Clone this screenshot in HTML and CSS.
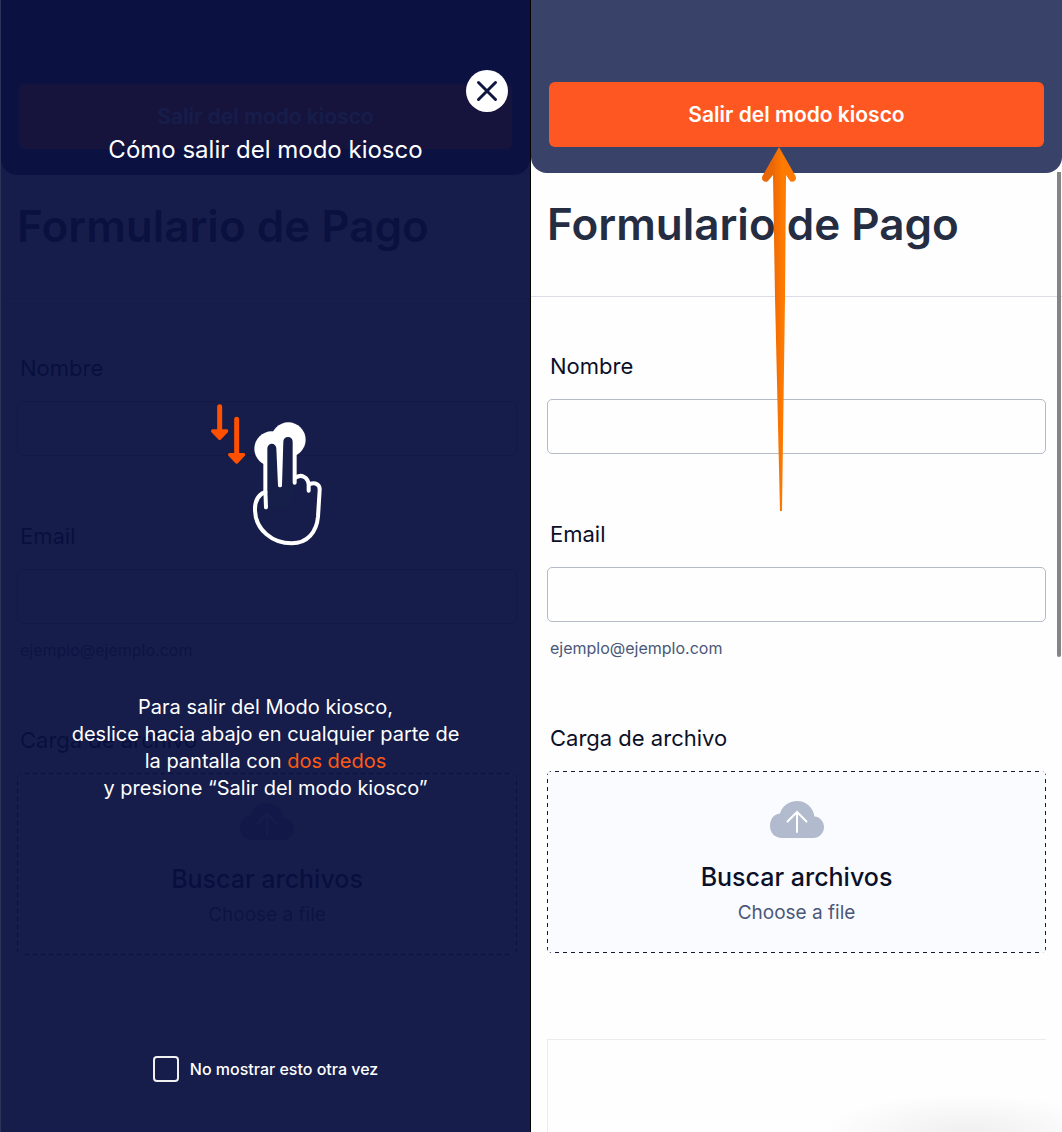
FILE: index.html
```html
<!DOCTYPE html>
<html lang="es">
<head>
<meta charset="utf-8">
<meta name="viewport" content="width=device-width, initial-scale=1">
<title>Modo kiosco</title>
<link rel="stylesheet" href="styles.css">
</head>
<body>
<main class="screens">

  <section class="screen screen--help">
    <div class="page" inert>
      <header class="kiosk-bar">
        <button class="exit-button" type="button">Salir del modo kiosco</button>
      </header>
      <h1 class="form-title">Formulario de Pago</h1>
      <form class="form">
        <div class="field">
          <label class="field-label" for="name-a">Nombre</label>
          <input class="field-input" id="name-a" type="text">
        </div>
        <div class="field">
          <label class="field-label" for="email-a">Email</label>
          <input class="field-input" id="email-a" type="email">
          <p class="field-hint">ejemplo@ejemplo.com</p>
        </div>
        <div class="field">
          <span class="field-label" id="file-a">Carga de archivo</span>
          <button class="dropzone" type="button" aria-describedby="file-a">
            <svg class="cloud" viewBox="0 0 54 37" aria-hidden="true">
              <path class="cloud-body" d="M12 37C5 37 0 32 0 25C0 18 4 13 10 12.500C12 5 19 0 27 0C36 0 43 6 44.500 15.500C50 16 54 20.500 54 26C54 32 49.500 37 43 37Z"/>
              <path class="cloud-arrow" d="M27 31V11.500M17.500 20.500L27 11L36.500 20.500"/>
            </svg>
            <span class="dropzone-title">Buscar archivos</span>
            <span class="dropzone-text">Choose a file</span>
          </button>
        </div>
        <div class="next-box"></div>
      </form>
    </div>

    <div class="help" role="dialog" aria-labelledby="help-title">
      <button class="close" type="button" aria-label="Cerrar">
        <svg viewBox="0 0 42 42" aria-hidden="true"><path d="M12.500 12.500L29.500 29.500M29.500 12.500L12.500 29.500"/></svg>
      </button>
      <h2 class="help-title" id="help-title">Cómo salir del modo kiosco</h2>
      <svg class="gesture" viewBox="54 36 342 435" aria-hidden="true">
        <g class="gesture-arrows">
          <path class="stem" d="M86 50V125M137 88V195"/>
          <path class="head" d="M65 123H107L86 145ZM116 194H158L137 216Z"/>
        </g>
        <circle class="touch" cx="242" cy="176" r="52"/>
        <circle class="touch" cx="292" cy="149" r="52"/>
        <path class="fill" d="M223 353V175A19 19 0 0 1 262 175L267 287L271 155A20 20 0 0 1 311 155V280L300 350Z"/>
        <path class="line" d="M225 352L223 300V175A19 19 0 0 1 262 175L267 286L271 155A20 20 0 0 1 311 155V278"/>
        <path class="line" d="M223 306C200 314 191 335 192 362C194 420 245 460 302 460C350 460 377 425 381 380L386 300C387 284 374 276 356 282"/>
        <path class="line" d="M353 302V284C351 261 330 250 312 264"/>
      </svg>
      <p class="help-text">Para salir del Modo kiosco,<br>deslice hacia abajo en cualquier parte de<br>la pantalla con <em>dos dedos</em><br>y presione “Salir del modo kiosco”</p>
      <label class="again"><input class="again-box" type="checkbox">No mostrar esto otra vez</label>
    </div>
  </section>

  <section class="screen screen--form">
    <div class="page">
      <header class="kiosk-bar">
        <button class="exit-button" type="button">Salir del modo kiosco</button>
      </header>
      <h1 class="form-title">Formulario de Pago</h1>
      <form class="form">
        <div class="field">
          <label class="field-label" for="name-b">Nombre</label>
          <input class="field-input" id="name-b" type="text">
        </div>
        <div class="field">
          <label class="field-label" for="email-b">Email</label>
          <input class="field-input" id="email-b" type="email">
          <p class="field-hint">ejemplo@ejemplo.com</p>
        </div>
        <div class="field">
          <span class="field-label" id="file-b">Carga de archivo</span>
          <button class="dropzone" type="button" aria-describedby="file-b">
            <svg class="cloud" viewBox="0 0 54 37" aria-hidden="true">
              <path class="cloud-body" d="M12 37C5 37 0 32 0 25C0 18 4 13 10 12.500C12 5 19 0 27 0C36 0 43 6 44.500 15.500C50 16 54 20.500 54 26C54 32 49.500 37 43 37Z"/>
              <path class="cloud-arrow" d="M27 31V11.500M17.500 20.500L27 11L36.500 20.500"/>
            </svg>
            <span class="dropzone-title">Buscar archivos</span>
            <span class="dropzone-text">Choose a file</span>
          </button>
        </div>
        <div class="next-box"></div>
      </form>
    </div>
    <div class="scroll-thumb"></div>
    <svg class="pointer" viewBox="0 0 36 366" aria-hidden="true">
      <defs>
        <linearGradient id="pointer-fill" x1="0" x2="1" y1="0" y2="0">
          <stop offset="0.300" stop-color="#ea6707"/>
          <stop offset="0.600" stop-color="#ff7a00"/>
        </linearGradient>
      </defs>
      <path fill="url(#pointer-fill)" d="M18 0L34.500 29C36.500 33 32 36.500 29 34L25 28L24 150L21 364H19L14 150L12 28L7 34C4 36.500 -0.500 33 1.500 29Z"/>
    </svg>
  </section>

</main>
</body>
</html>
```
FILE: styles.css
```css
*, *::before, *::after { box-sizing: border-box; }

body {
  margin: 0;
  font-family: Inter, "Liberation Sans", sans-serif;
  color: #0a1028;
  background: #fff;
}

h1, h2, p { margin: 0; }

button, input { font: inherit; color: inherit; }

.screens {
  display: grid;
  grid-template-columns: 1fr 1fr;
  min-height: 100vh;
}

.screen {
  position: relative;
  display: flex;
  flex-direction: column;
  background: #fefefe;
  overflow: hidden;
}

.screen--help {
  border-left: 1px solid #2c3459;
  border-right: 1px solid #000;
}

.page {
  flex: 1;
  display: flex;
  flex-direction: column;
}

.screen--help .page { padding-top: 2px; background: linear-gradient(#394268 2px, transparent 2px); }

.kiosk-bar {
  padding: 82px 18px 26px;
  background: #394268;
  border-radius: 0 0 16px 16px;
}

.exit-button {
  display: block;
  width: 100%;
  height: 65px;
  border: 0;
  border-radius: 6px;
  background: #ff5722;
  color: #fff;
  font-size: 21px;
  font-weight: 600;
}

.form-title {
  padding: 23px 16px 43px;
  border-bottom: 1px solid #dcdde6;
  color: #252d43;
  font-size: 44px;
  font-weight: 600;
  line-height: 57px;
}

.form {
  flex: 1;
  display: flex;
  flex-direction: column;
  gap: 66px;
  padding: 55px 16px 0;
}

.screen--help .form { padding-right: 13px; }

.field { display: flex; flex-direction: column; }

.field-label {
  padding: 0 3px;
  margin-bottom: 19px;
  font-size: 22px;
  line-height: 28px;
}

.field-input {
  width: 100%;
  height: 55px;
  padding: 0 16px;
  border: 1px solid #b4bac6;
  border-radius: 5px;
  background: #fefefe;
  font-size: 22px;
}

.field-hint {
  margin-top: 16px;
  padding: 0 3px;
  color: #4a5878;
  font-size: 16px;
  line-height: 20px;
}

.dropzone {
  --dash: #14182f 0 4px, transparent 4px 8px;
  display: flex;
  flex-direction: column;
  align-items: center;
  height: 182px;
  padding: 30px 16px 0;
  border: 0;
  border-radius: 5px;
  background:
    repeating-linear-gradient(90deg, var(--dash)) top / 100% 1px no-repeat,
    repeating-linear-gradient(90deg, var(--dash)) bottom / 100% 1px no-repeat,
    repeating-linear-gradient(var(--dash)) left / 1px 100% no-repeat,
    repeating-linear-gradient(var(--dash)) right / 1px 100% no-repeat,
    #fafbff;
}

.cloud { width: 54px; height: 37px; }
.cloud-body { fill: #b2bbcd; }
.cloud-arrow { fill: none; stroke: #fff; stroke-width: 2; stroke-linecap: round; }

.dropzone-title {
  margin-top: 24px;
  font-size: 25px;
  font-weight: 500;
  line-height: 30px;
}

.dropzone-text {
  margin-top: 9px;
  color: #4a5878;
  font-size: 19px;
  line-height: 24px;
}

.next-box {
  flex: 1;
  min-height: 92px;
  margin-top: 20px;
  border: solid #ececec;
  border-width: 1px 0 0 1px;
}

.help {
  position: absolute;
  inset: 0;
  display: flex;
  flex-direction: column;
  align-items: center;
  padding-top: 134px;
  background: rgba(8, 16, 63, 0.945);
  color: #fff;
  text-align: center;
}

.close {
  position: absolute;
  top: 70px;
  right: 22px;
  width: 42px;
  height: 42px;
  padding: 0;
  border: 0;
  border-radius: 50%;
  background: #fff;
}

.close svg { display: block; width: 42px; height: 42px; }
.close path { fill: none; stroke: #0f1740; stroke-width: 3; stroke-linecap: round; }

.help-title {
  font-size: 24px;
  font-weight: 400;
  line-height: 32px;
}

.gesture { width: 114px; height: 145px; margin-top: 236px; }
.gesture-arrows { fill: #ff5000; stroke: #ff5000; stroke-linejoin: round; stroke-linecap: round; }
.gesture .stem { stroke-width: 15; }
.gesture .head { stroke-width: 10; }
.gesture .touch { fill: #fff; }
.gesture .fill { fill: #161e4a; }
.gesture .line { fill: none; stroke: #fff; stroke-width: 12; stroke-linecap: round; stroke-linejoin: round; }

.help-text {
  margin-top: 147px;
  font-size: 20px;
  line-height: 27px;
}

.help-text em { color: #ff5a14; font-style: normal; }

.again {
  display: flex;
  align-items: center;
  gap: 11px;
  margin-top: 254px;
  font-size: 16px;
  font-weight: 500;
  line-height: 26px;
}

.again-box {
  appearance: none;
  width: 26px;
  height: 26px;
  margin: 0;
  border: 2px solid #f0f0f0;
  border-radius: 4px;
}

.screen--form::after {
  content: "";
  position: absolute;
  right: 0;
  bottom: 0;
  width: 240px;
  height: 40px;
  background: radial-gradient(ellipse at 60% 100%, rgba(0, 0, 0, 0.06), transparent 70%);
  pointer-events: none;
}

.scroll-thumb {
  position: absolute;
  top: 172px;
  right: 1px;
  width: 4px;
  height: 485px;
  border-radius: 0 0 2px 2px;
  background: #848484;
}

.pointer {
  position: absolute;
  top: 147px;
  left: calc(50% - 36px);
  width: 36px;
  height: 366px;
}
```
